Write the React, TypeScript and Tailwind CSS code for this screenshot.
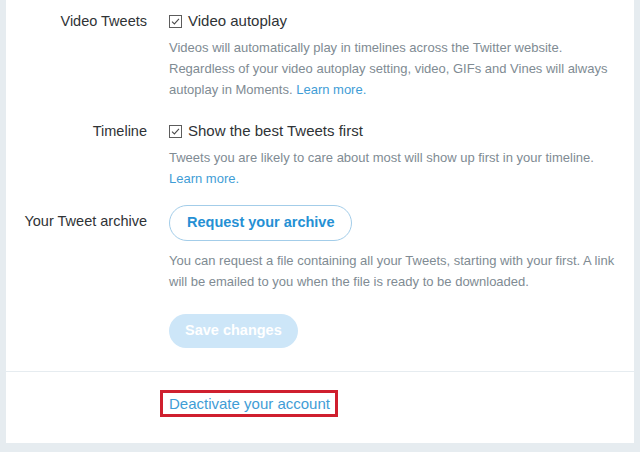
import React from "react";

const font = { fontFamily: '"Liberation Sans", Arial, sans-serif' };

const Check: React.FC = () => (
	<span className="flex h-[13px] w-[13px] items-center justify-center border border-[#5c5c5c] bg-white">
		<svg viewBox="0 0 12 12" className="h-[11px] w-[11px]">
			<path d="M2.2 6.2 L4.8 8.6 L9.8 3.2" fill="none" stroke="#4a4a4a" strokeWidth="1.2" />
		</svg>
	</span>
);

const Label: React.FC<{ children: React.ReactNode; className?: string }> = ({
	children,
	className = "",
}) => (
	<div className={`text-right text-[14.5px] leading-5 text-[#2f3336] ${className}`}>
		{children}
	</div>
);

const Desc: React.FC<{ children: React.ReactNode; className?: string }> = ({
	children,
	className = "",
}) => (
	<p className={`text-[13px] leading-[21px] text-[#808b93] ${className}`}>{children}</p>
);

const Link: React.FC<{ children: React.ReactNode }> = ({ children }) => (
	<a className="text-[#3f9dd6]">{children}</a>
);

export default function App() {
	return (
		<div className="h-[452px] w-[640px] overflow-hidden bg-[#e6ecf0] px-[6px]" style={font}>
			<div className="bg-white">
				<div className="grid grid-cols-[141px_1fr] gap-x-[22px] pt-[11px] pb-[23px]">
					<Label>Video Tweets</Label>
					<div>
						<label className="flex items-center gap-[6px] text-[15px] leading-5 text-[#2f3336]">
							<Check />
							Video autoplay
						</label>
						<Desc className="mt-[6px]">
							Videos will automatically play in timelines across the Twitter website.
							<br />
							Regardless of your video autoplay setting, video, GIFs and Vines will always
							<br />
							autoplay in Moments. <Link>Learn more.</Link>
						</Desc>
					</div>

					<Label className="mt-[21px]">Timeline</Label>
					<div className="mt-[21px]">
						<label className="flex items-center gap-[6px] text-[15px] leading-5 text-[#2f3336]">
							<Check />
							Show the best Tweets first
						</label>
						<Desc className="mt-[6px]">
							Tweets you are likely to care about most will show up first in your timeline.
							<br />
							<Link>Learn more.</Link>
						</Desc>
					</div>

					<Label className="mt-[16px] pt-[6px]">Your Tweet archive</Label>
					<div className="mt-[16px]">
						<button className="h-[36px] rounded-full border border-[#a3cde9] px-[17px] text-[14.5px] font-bold text-[#2590d4]">
							Request your archive
						</button>
						<Desc className="mt-[9px]">
							You can request a file containing all your Tweets, starting with your first. A link
							<br />
							will be emailed to you when the file is ready to be downloaded.
						</Desc>
						<button className="mt-[22px] h-[34px] rounded-full bg-[#cde6f8] px-[16px] text-[14.5px] font-bold text-white">
							Save changes
						</button>
					</div>
				</div>

				<div className="border-t border-[#e6ecf0] pt-[18px] pb-[26px] pl-[154px]">
					<div className="inline-block border-[3px] border-[#cf1f2e] pl-[6px] pr-[5px] text-[15px] leading-[21px]">
						<Link>Deactivate your account</Link>
					</div>
				</div>
			</div>
		</div>
	);
}
